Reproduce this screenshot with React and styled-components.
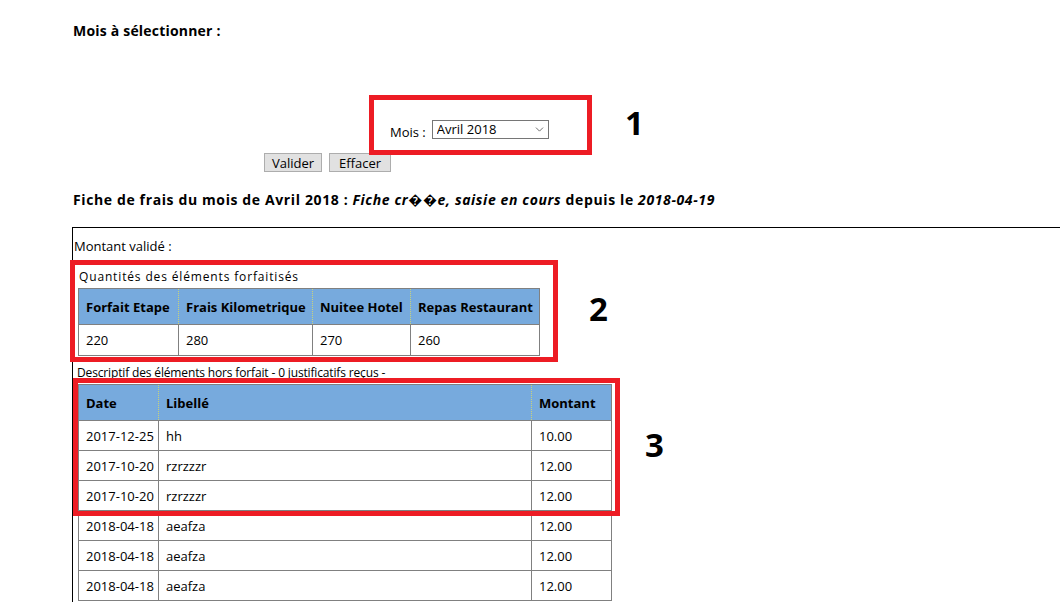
import React from "react"
import styled, { createGlobalStyle } from "styled-components"
import { ChevronDown } from "lucide-react"

const forfaits = [
  { label: "Forfait Etape", qte: 220, w: 100 },
  { label: "Frais Kilometrique", qte: 280, w: 134 },
  { label: "Nuitee Hotel", qte: 270, w: 98 },
  { label: "Repas Restaurant", qte: 260, w: 129 },
]

const horsForfait = [
  ["2017-12-25", "hh", "10.00"],
  ["2017-10-20", "rzrzzzr", "12.00"],
  ["2017-10-20", "rzrzzzr", "12.00"],
  ["2018-04-18", "aeafza", "12.00"],
  ["2018-04-18", "aeafza", "12.00"],
  ["2018-04-18", "aeafza", "12.00"],
]

export default function App() {
  return (
    <Page>
      <GlobalStyle />
      <Title $spacing={0.2}>Mois à sélectionner :</Title>
      <Form>
        <MoisRow>
          <label>Mois :</label>
          <SelectWrap>
            <Select defaultValue="042018">
              <option value="042018">Avril 2018</option>
            </Select>
            <ChevronDown size={13} strokeWidth={1.4} />
          </SelectWrap>
        </MoisRow>
        <Buttons>
          <Button>Valider</Button>
          <Button $pad={9}>Effacer</Button>
        </Buttons>
      </Form>
      <Title as="h3" $top={19} $spacing={0.62}>
        Fiche de frais du mois de Avril 2018 : <em>Fiche cr��e, saisie en cours</em> depuis le{" "}
        <em>2018-04-19</em>
      </Title>
      <Encadre>
        <p>Montant validé :</p>
        <Caption $spacing={0.85}>Quantités des éléments forfaitisés</Caption>
        <Table $width={461}>
          <thead>
            <tr>
              {forfaits.map((f) => (
                <Th key={f.label} style={{ width: f.w }}>
                  {f.label}
                </Th>
              ))}
            </tr>
          </thead>
          <tbody>
            <tr>
              {forfaits.map((f) => (
                <Td key={f.label}>{f.qte}</Td>
              ))}
            </tr>
          </tbody>
        </Table>
        <Caption $left={3} $top={9} $spacing={-0.15}>
          Descriptif des éléments hors forfait - 0 justificatifs reçus -
        </Caption>
        <Table $width={533}>
          <thead>
            <tr>
              <Th style={{ width: 80 }}>Date</Th>
              <Th style={{ width: 373 }}>Libellé</Th>
              <Th style={{ width: 80 }}>Montant</Th>
            </tr>
          </thead>
          <tbody>
            {horsForfait.map((r, i) => (
              <tr key={i}>
                <Td $row>{r[0]}</Td>
                <Td $row>{r[1]}</Td>
                <Td $row>{r[2]}</Td>
              </tr>
            ))}
          </tbody>
        </Table>
      </Encadre>

      <Marker $x={369} $y={95} $w={223} $h={60} />
      <Marker $x={70} $y={260} $w={488} $h={102} />
      <Marker $x={73} $y={378} $w={547} $h={138} />
      <Num $x={625} $y={103}>1</Num>
      <Num $x={589} $y={289}>2</Num>
      <Num $x={645} $y={425}>3</Num>
    </Page>
  )
}

const GlobalStyle = createGlobalStyle`
  html, body {
    margin: 0;
    background: #fff;
    overflow: hidden;
  }
  body {
    font-family: "Open Sans", "DejaVu Sans", sans-serif;
    color: #000;
  }
`

const Page = styled.div`
  position: relative;
  width: 1060px;
  height: 602px;
  overflow: hidden;
  padding-left: 73px;
  box-sizing: border-box;
`

const Title = styled.h2`
  margin: ${(p) => p.$top ?? 22}px 0 0;
  font-size: 14px;
  line-height: 18px;
  font-weight: 700;
  letter-spacing: ${(p) => p.$spacing ?? 0}px;
  em {
    font-style: italic;
  }
`

const Form = styled.form`
  display: flex;
  flex-direction: column;
  margin-top: 80px;
`

const MoisRow = styled.div`
  display: flex;
  align-items: center;
  gap: 6px;
  padding-left: 317px;
  height: 19px;
  font-size: 13px;
  label {
    padding-top: 4px;
  }
`

const SelectWrap = styled.div`
  position: relative;
  svg {
    position: absolute;
    right: 3px;
    top: 3px;
    color: #444;
    pointer-events: none;
  }
`

const Select = styled.select`
  appearance: none;
  width: 117px;
  height: 19px;
  border: 1px solid #767676;
  border-radius: 0;
  background: #fff;
  font-family: "Open Sans", sans-serif;
  font-size: 13px;
  line-height: 17px;
  padding: 0 0 0 4px;
  color: #000;
`

const Buttons = styled.div`
  display: flex;
  gap: 7px;
  margin-top: 14px;
  padding-left: 191px;
`

const Button = styled.button`
  height: 19px;
  padding: 0 ${(p) => p.$pad ?? 7}px;
  background: #e1e1e1;
  border: 1px solid #adadad;
  border-radius: 0;
  font-family: "Open Sans", sans-serif;
  font-size: 13px;
  line-height: 16px;
  color: #000;
`

const Encadre = styled.div`
  margin: 18px 0 0 -1px;
  border-top: 1px solid #000;
  border-left: 1px solid #000;
  padding: 11px 0 0 1px;
  height: 600px;
  font-size: 13px;
  p {
    margin: 0;
    line-height: 15px;
  }
`

const Caption = styled.div`
  margin: ${(p) => p.$top ?? 15}px 0 0 ${(p) => p.$left ?? 5}px;
  font-size: 12px;
  line-height: 15px;
  letter-spacing: ${(p) => p.$spacing ?? 0}px;
`

const Table = styled.table`
  border-collapse: collapse;
  table-layout: fixed;
  width: ${(p) => p.$width}px;
  margin: 4px 0 0 4px;
  font-size: 13px;
  border: 1px solid #808080;
`

const Th = styled.th`
  background: #77aadd;
  height: 36px;
  padding: 0 7px;
  text-align: left;
  font-weight: 700;
  font-size: 13px;
  border-top: 1px solid #808080;
  border-bottom: 1px solid #808080;
  border-left: 1px dotted #c9d27a;
  box-sizing: border-box;
  white-space: nowrap;
  &:first-child {
    border-left: 1px solid #808080;
  }
`

const Td = styled.td`
  height: ${(p) => (p.$row ? 30 : 31)}px;
  padding: 0 7px;
  border: 1px solid #808080;
  white-space: nowrap;
  box-sizing: border-box;
`

const Marker = styled.div`
  position: absolute;
  left: ${(p) => p.$x}px;
  top: ${(p) => p.$y}px;
  width: ${(p) => p.$w}px;
  height: ${(p) => p.$h}px;
  border: 5px solid #ed1c24;
  box-sizing: border-box;
  pointer-events: none;
`

const Num = styled.div`
  position: absolute;
  left: ${(p) => p.$x}px;
  top: ${(p) => p.$y}px;
  font-family: "Open Sans", sans-serif;
  font-weight: 700;
  font-size: 33px;
  line-height: 40px;
`
